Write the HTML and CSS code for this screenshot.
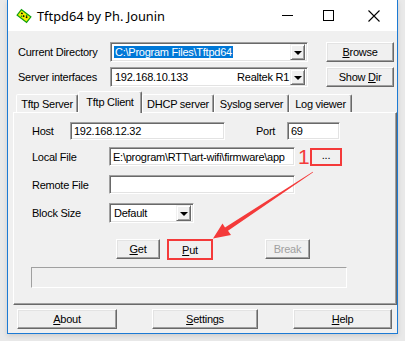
FILE: index.html
```html
<!DOCTYPE html>
<html>
<head>
<meta charset="utf-8">
<link rel="stylesheet" href="styles.css">
</head>
<body>
<div class="screen">
  <div class="window">
    <div class="titlebar">
      <svg class="appicon" width="16" height="16" viewBox="0 0 16 16">
        <g transform="rotate(38 8 8)">
          <rect x="2" y="4.5" width="12" height="7" fill="#f4f000" stroke="#10a010" stroke-width="1.2"/>
          <rect x="4" y="6.5" width="1.6" height="1.6" fill="#000"/>
          <rect x="7" y="7.5" width="1.6" height="1.6" fill="#000"/>
          <rect x="10" y="6.5" width="1.6" height="1.6" fill="#000"/>
          <rect x="5.5" y="9" width="1.4" height="1.4" fill="#10a010"/>
          <rect x="9" y="5.2" width="1.4" height="1.4" fill="#10a010"/>
        </g>
      </svg>
      <span class="title">Tftpd64 by Ph. Jounin</span>
      <div class="controls">
        <span class="ctl ctl-min"><svg width="11" height="11" viewBox="0 0 11 11"><line x1="0" y1="5.5" x2="11" y2="5.5" stroke="#000" stroke-width="1"/></svg></span>
        <span class="ctl"><svg width="11" height="11" viewBox="0 0 11 11"><rect x="0.5" y="0.5" width="10" height="10" fill="none" stroke="#000" stroke-width="1"/></svg></span>
        <span class="ctl"><svg width="12" height="12" viewBox="0 0 12 12"><path d="M0.5 0.5 L11.5 11.5 M11.5 0.5 L0.5 11.5" stroke="#000" stroke-width="1.1" fill="none"/></svg></span>
      </div>
    </div>

    <div class="client">
      <div class="toprow first">
        <span class="lbl-top">Current Directory</span>
        <div class="combo combo-top">
          <span class="val"><span class="sel">C:\Program Files\Tftpd64</span></span>
          <span class="drop"><span class="tri"></span></span>
        </div>
        <div class="btn side"><span><u>B</u>rowse</span></div>
      </div>
      <div class="toprow">
        <span class="lbl-top">Server interfaces</span>
        <div class="combo combo-top">
          <span class="val split"><span>192.168.10.133</span><span>Realtek R1</span></span>
          <span class="drop"><span class="tri"></span></span>
        </div>
        <div class="btn side"><span>Show <u>D</u>ir</span></div>
      </div>

      <div class="tabs">
        <div class="tab t1">Tftp Server</div>
        <div class="tab active t2">Tftp Client</div>
        <div class="tab t3">DHCP server</div>
        <div class="tab t4">Syslog server</div>
        <div class="tab t5">Log viewer</div>
      </div>

      <div class="panel">
        <div class="prow host-row">
          <span class="plbl lbl-host">Host</span>
          <div class="field host">192.168.12.32</div>
          <span class="plbl lbl-port">Port</span>
          <div class="field port">69</div>
        </div>
        <div class="prow file-row">
          <span class="plbl lbl-wide">Local File</span>
          <div class="field file">E:\program\RTT\art-wifi\firmware\app</div>
          <span class="mark">1</span>
          <div class="btn dots marked">...</div>
        </div>
        <div class="prow remote-row">
          <span class="plbl lbl-wide">Remote File</span>
          <div class="field file"></div>
        </div>
        <div class="prow block-row">
          <span class="plbl lbl-wide">Block Size</span>
          <div class="combo block">
            <span class="val">Default</span>
            <span class="drop"><span class="tri"></span></span>
          </div>
        </div>
        <div class="prow action-row">
          <div class="btn get"><span><u>G</u>et</span></div>
          <div class="btn put marked"><span><u>P</u>ut</span></div>
          <div class="btn brk disabled"><span>Break</span></div>
        </div>
        <div class="progress"></div>
      </div>

      <div class="bottombar">
        <div class="btn about"><span><u>A</u>bout</span></div>
        <div class="btn settings"><span><u>S</u>ettings</span></div>
        <div class="btn help"><span><u>H</u>elp</span></div>
      </div>
    </div>
  </div>

  <svg class="annot" width="405" height="341" viewBox="0 0 405 341">
    <polygon fill="#f43a3a" points="313.2,172.3 228.0,230.8 231.0,235.0 213,238.5 222.5,223.5 225.0,227.5 312.8,171.7"/>
  </svg>
</div>
</body>
</html>
```

FILE: styles.css
```css
html, body {
  margin: 0;
  padding: 0;
}
body {
  width: 405px;
  height: 341px;
  overflow: hidden;
  background: #e9e9e9;
  font-family: "Liberation Sans", Arial, sans-serif;
  font-size: 11px;
  letter-spacing: -0.25px;
  color: #000;
}
.screen {
  position: relative;
  width: 405px;
  height: 341px;
}
.window {
  margin-left: 7px;
  width: 389px;
  height: 333px;
  border: 1px solid #1c7ad4;
  border-top: none;
  background: #f0f0f0;
  display: flex;
  flex-direction: column;
  box-shadow: 0 2px 5px rgba(0, 0, 0, 0.12);
}

/* title bar */
.titlebar {
  height: 31px;
  flex: none;
  background: #fff;
  display: flex;
  align-items: center;
}
.appicon {
  margin-left: 8px;
  flex: none;
}
.title {
  margin-left: 5px;
  font-family: "Noto Sans", "Open Sans", sans-serif;
  font-size: 12.8px;
  letter-spacing: 0;
  color: #000;
}
.controls {
  margin-left: auto;
  display: flex;
  height: 31px;
}
.ctl {
  width: 46px;
  display: flex;
  align-items: center;
  justify-content: center;
}
.ctl-min {
  padding-left: 10px;
  width: 36px;
}

/* client */
.client {
  flex: 1;
  display: flex;
  flex-direction: column;
}
.toprow {
  display: flex;
  align-items: center;
  height: 20px;
  margin-top: 5px;
}
.toprow.first {
  margin-top: 11px;
}
.lbl-top {
  width: 92px;
  padding-left: 10px;
  flex: none;
}

/* sunken / raised primitives */
.combo, .field {
  box-sizing: border-box;
  background: #fff;
  border: 1px solid;
  border-color: #a0a0a0 #fff #fff #a0a0a0;
  box-shadow: inset 1px 1px #696969, inset -1px -1px #e3e3e3;
  display: flex;
  align-items: center;
  flex: none;
  overflow: hidden;
  white-space: nowrap;
}
.combo {
  padding: 2px;
}
.combo-top {
  width: 198px;
  height: 20px;
}
.combo .val {
  flex: 1;
  min-width: 0;
  padding-left: 1px;
  overflow: hidden;
  white-space: nowrap;
}
.val.split {
  display: flex;
  justify-content: space-between;
  padding-left: 2px;
  padding-right: 1px;
}
.sel {
  background: #0078d7;
  color: #fff;
  padding: 1px 1px;
}
.drop {
  width: 15px;
  height: 16px;
  box-sizing: border-box;
  flex: none;
  background: #f0f0f0;
  border: 1px solid;
  border-color: #f0f0f0 #696969 #696969 #f0f0f0;
  box-shadow: inset 1px 1px #fff, inset -1px -1px #a0a0a0;
  display: flex;
  align-items: center;
  justify-content: center;
}
.tri {
  width: 0;
  height: 0;
  border-left: 4px solid transparent;
  border-right: 4px solid transparent;
  border-top: 4px solid #000;
  margin-top: 1px;
}

.btn {
  box-sizing: border-box;
  height: 20px;
  flex: none;
  background: #f0f0f0;
  border: 1px solid;
  border-color: #fff #696969 #696969 #fff;
  box-shadow: inset -1px -1px #a0a0a0, inset 1px 1px #e3e3e3;
  display: flex;
  align-items: center;
  justify-content: center;
  white-space: nowrap;
}
.btn.side {
  width: 68px;
  margin-left: 18px;
}
.btn.disabled {
  color: #a0a0a0;
}
.btn.marked {
  border: 2px solid #f43a3a;
  box-shadow: none;
}

/* tabs */
.tabs {
  display: flex;
  align-items: flex-end;
  height: 21px;
  margin-top: 4px;
  padding-left: 8px;
  position: relative;
  z-index: 1;
}
.tab {
  box-sizing: border-box;
  height: 18px;
  background: #f0f0f0;
  border: 1px solid;
  border-bottom: none;
  border-color: #fff #696969 transparent #fff;
  box-shadow: inset -1px 0 #a0a0a0;
  border-radius: 2px 2px 0 0;
  display: flex;
  align-items: center;
  justify-content: center;
  padding-top: 1px;
  white-space: nowrap;
}
.tab.active {
  height: 22px;
  margin-bottom: -1px;
  padding-bottom: 3px;
}
.t1 { width: 62px; }
.t2 { width: 64px; }
.t3 { width: 72px; }
.t4 { width: 75px; }
.t5 { width: 63px; }

/* panel */
.panel {
  box-sizing: border-box;
  margin-left: 5px;
  width: 384px;
  height: 193px;
  flex: none;
  border: 1px solid;
  border-color: #fff #696969 #696969 #fff;
  box-shadow: inset -1px -1px #a0a0a0;
  display: flex;
  flex-direction: column;
}
.prow {
  display: flex;
  align-items: center;
  padding-left: 18px;
}
.plbl {
  flex: none;
}
.host-row { margin-top: 9px; height: 18px; }
.lbl-host { width: 38px; }
.field.host { width: 155px; height: 18px; padding-left: 3px; }
.lbl-port { width: 31px; margin-left: 31px; }
.field.port { width: 53px; height: 18px; padding-left: 3px; }

.file-row { margin-top: 7px; height: 19px; }
.lbl-wide { width: 77px; }
.field.file { width: 186px; height: 19px; padding-left: 3px; }
.mark {
  width: 15px;
  padding-left: 3px;
  box-sizing: border-box;
  color: #f43a3a;
  font-size: 21px;
  letter-spacing: 0;
  line-height: 19px;
  flex: none;
}
.btn.dots {
  width: 32px;
  height: 18px;
  padding-bottom: 3px;
}
.remote-row { margin-top: 9px; height: 19px; }
.block-row { margin-top: 9px; height: 20px; }
.combo.block {
  width: 85px;
  height: 20px;
}
.combo.block .val { padding-left: 2px; }

.action-row {
  margin-top: 16px;
  height: 21px;
  align-items: flex-start;
  padding-left: 102px;
}
.btn.get { width: 44px; }
.btn.put { width: 46px; height: 21px; margin-left: 7px; }
.btn.brk { width: 45px; margin-left: 52px; }

.progress {
  margin-top: 7px;
  margin-left: 17px;
  width: 316px;
  height: 21px;
  box-sizing: border-box;
  border: 1px solid;
  border-color: #a0a0a0 #fff #fff #a0a0a0;
  background: #f0f0f0;
}

/* bottom buttons */
.bottombar {
  display: flex;
  margin-top: 4px;
  height: 20px;
  padding-left: 9px;
}
.btn.about { width: 100px; }
.btn.settings { width: 106px; margin-left: 35px; }
.btn.help { width: 99px; margin-left: 35px; }

/* annotation overlay */
.annot {
  position: absolute;
  left: 0;
  top: 0;
  pointer-events: none;
}
```
